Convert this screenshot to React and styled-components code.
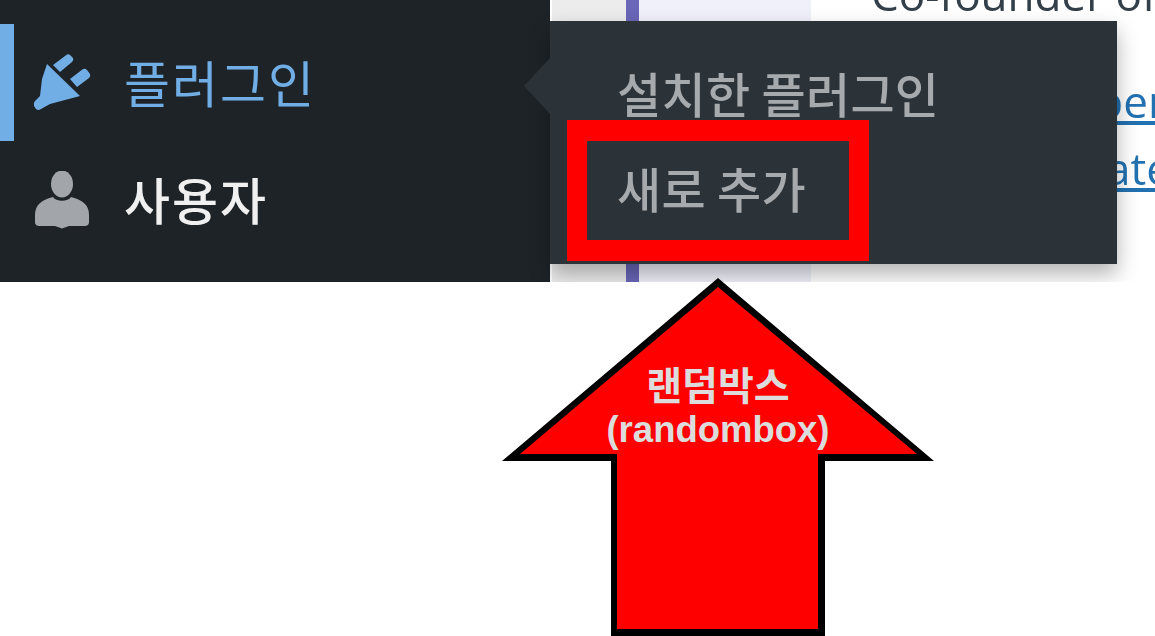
import React from "react";
import styled, { createGlobalStyle } from "styled-components";

const Global = createGlobalStyle`
  html, body { margin: 0; padding: 0; background: #fff; }
  #root { width: 1155px; height: 636px; overflow: hidden; }
`;

const KR = `"Noto Sans CJK KR", "Liberation Sans", sans-serif`;
const LATIN = `"Open Sans", "Liberation Sans", sans-serif`;

const Page = styled.div`
  position: relative;
  width: 1155px;
  height: 636px;
  background: #fff;
  overflow: hidden;
`;

const Capture = styled.div`
  position: relative;
  display: flex;
  height: 282px;
  overflow: hidden;
  filter: blur(0.6px);
`;

const Sidebar = styled.nav`
  width: 550px;
  flex: none;
  background: #1d2327;
  padding-top: 24px;
  box-sizing: border-box;
`;

const MenuRow = styled.div`
  display: flex;
  align-items: center;
  height: 117px;
  border-left: 14px solid ${(p) => (p.$active ? "#72aee6" : "transparent")};
  padding-left: 19px;
  gap: 34px;
  color: ${(p) => (p.$active ? "#72aee6" : "#f0f0f1")};
  font: ${(p) => (p.$active ? 400 : 500)} 50px/1 ${KR};
`;

const MenuLabel = styled.span`
  letter-spacing: 2px;
  margin-top: -4px;
  margin-left: -1px;
`;

const Content = styled.main`
  flex: 1;
  display: flex;
  background: #fff;
  padding-left: 2px;
`;

const Gutter = styled.div`
  width: 74px;
  background: #ececec;
`;

const Quote = styled.div`
  width: 172px;
  background: #f0f0fa;
  border-left: 13px solid #6a66b8;
`;

const Body = styled.div`
  flex: 1;
  min-width: 0;
  padding-left: 60px;
  display: flex;
  flex-direction: column;
  align-items: flex-start;
  font: 400 44px/60px ${LATIN};
  color: #2c3338;
  white-space: nowrap;
`;

const Role = styled.div`
  margin-top: -36px;
  height: 60px;
  color: #33404a;
`;

const LinkLine = styled.a`
  align-self: flex-end;
  color: #2271b1;
  text-decoration: underline;
  height: 66px;
  margin-top: ${(p) => p.$gap}px;
  margin-right: ${(p) => p.$bleed}px;
`;

const Flyout = styled.div`
  position: absolute;
  left: 550px;
  top: 21px;
  width: 567px;
  height: 243px;
  background: #2c3338;
  box-shadow: 0 10px 20px rgba(0, 0, 0, 0.3);
  padding: 38px 0 0 67px;
  box-sizing: border-box;
  display: flex;
  flex-direction: column;
  gap: 29px;
  &::before {
    content: "";
    position: absolute;
    left: -26px;
    top: 37px;
    border-style: solid;
    border-width: 28px 26px 28px 0;
    border-color: transparent #2c3338 transparent transparent;
  }
`;

const SubItem = styled.div`
  color: #a7aaad;
  font: 500 48px/66px ${KR};
  height: 66px;
  white-space: pre;
  letter-spacing: 0.3px;
`;

const Highlight = styled.div`
  position: absolute;
  left: 567px;
  top: 120px;
  width: 302px;
  height: 141px;
  box-sizing: border-box;
  border: 20px solid #f00;
  border-top-width: 21px;
  border-bottom-width: 21px;
`;

const ArrowSvg = styled.svg`
  position: absolute;
  left: 0;
  top: 0;
`;

const ArrowLabel = styled.div`
  position: absolute;
  left: 568px;
  top: 360px;
  width: 300px;
  display: flex;
  flex-direction: column;
  align-items: center;
  color: #dcdcdc;
  font-weight: 700;
`;

const LabelKo = styled.span`
  font: 700 39px/46px ${KR};
`;

const LabelEn = styled.span`
  font: 700 36.5px/46px "Liberation Sans", sans-serif;
  margin-top: 1px;
`;

const UserGlyph = styled.svg`
  margin-top: 3px;
  flex: none;
`;

const PlugGlyph = styled.svg`
  flex: none;
`;

const PlugIcon = () => (
  <PlugGlyph width="58" height="58" viewBox="0 0 58 58" fill="#72aee6">
    <path d="M20 11 L34 0.5 Q36 0 37 1 L40 4 Q41 6 39 8 L27 18 Z" />
    <path d="M37 25 L50 15 Q52 14 54 16 L57 20 Q58 22 56 24 L44 33 Z" />
    <path d="M14 10 L47 42 L17 50 L8 55 Q5 57 3 55 L1 52 Q0 49 2 47 L7 42 L9 25 Z" />
  </PlugGlyph>
);

const UserIcon = () => (
  <UserGlyph width="58" height="60" viewBox="0 0 58 60" fill="#a2a6aa">
    <ellipse cx="29" cy="13" rx="11" ry="13.5" />
    <path d="M20 26 C23 31 35 31 38 26 C50 29 56 34 56 44 L56 51 C56 54 54 55 51 55 L36 55 L29 57.5 L22 55 L7 55 C4 55 2 54 2 51 L2 44 C2 34 8 29 20 26 Z" />
  </UserGlyph>
);

export default function App() {
  return (
    <Page>
      <Global />
      <Capture>
        <Sidebar>
          <MenuRow $active>
            <PlugIcon />
            <MenuLabel>플러그인</MenuLabel>
          </MenuRow>
          <MenuRow>
            <UserIcon />
            <MenuLabel>사용자</MenuLabel>
          </MenuRow>
        </Sidebar>
        <Content>
          <Gutter />
          <Quote />
          <Body>
            <Role>Co-founder of</Role>
            <LinkLine $gap={47} $bleed={-9}>member</LinkLine>
            <LinkLine $gap={1} $bleed={-14}>update</LinkLine>
          </Body>
        </Content>
        <Flyout>
          <SubItem>설치한 플러그인</SubItem>
          <SubItem>새로 추가</SubItem>
        </Flyout>
      </Capture>
      <Highlight />
      <ArrowSvg width="1155" height="636" viewBox="0 0 1155 636">
        <polygon points="718,278 934,461 825,461 825,636 611,636 611,461 502,461" fill="#000" />
        <polygon points="718,287 917,454 818,454 818,629 617,629 617,454 520,454" fill="#f00" />
      </ArrowSvg>
      <ArrowLabel>
        <LabelKo>랜덤박스</LabelKo>
        <LabelEn>(randombox)</LabelEn>
      </ArrowLabel>
    </Page>
  );
}
